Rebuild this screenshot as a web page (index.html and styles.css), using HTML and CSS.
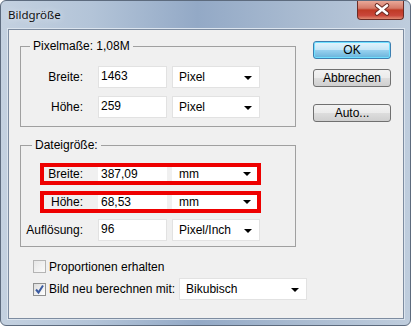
FILE: index.html
```html
<!DOCTYPE html>
<html lang="de">
<head>
    <meta charset="UTF-8">
    <title>Bildgröße</title>
    <link rel="stylesheet" href="styles.css">
</head>
<body>
<div class="window">
    <div class="titlebar">
        <span class="title">Bildgröße</span>
        <div class="close">
            <svg width="47" height="19" viewBox="0 0 47 19">
                <path d="M19 5.5 L29 13.5 M29 5.5 L19 13.5" stroke="#6a2b24" stroke-width="4.6" stroke-linecap="round"/>
                <path d="M19 5.5 L29 13.5 M29 5.5 L19 13.5" stroke="#ffffff" stroke-width="2.6" stroke-linecap="round"/>
            </svg>
        </div>
    </div>

    <div class="client">
        <div class="main">
            <fieldset class="group group-pixel">
                <legend>Pixelmaße: 1,08M</legend>
                <div class="row">
                    <span class="label">Breite:</span>
                    <div class="field">1463</div>
                    <div class="select">Pixel<span class="arrow"></span></div>
                </div>
                <div class="row">
                    <span class="label">Höhe:</span>
                    <div class="field">259</div>
                    <div class="select">Pixel<span class="arrow"></span></div>
                </div>
            </fieldset>

            <fieldset class="group group-file">
                <legend>Dateigröße:</legend>
                <div class="row marked">
                    <span class="label">Breite:</span>
                    <div class="field">387,09</div>
                    <div class="select">mm<span class="arrow"></span></div>
                </div>
                <div class="row marked">
                    <span class="label">Höhe:</span>
                    <div class="field">68,53</div>
                    <div class="select">mm<span class="arrow"></span></div>
                </div>
                <div class="row row-res">
                    <span class="label">Auflösung:</span>
                    <div class="field">96</div>
                    <div class="select">Pixel/Inch<span class="arrow"></span></div>
                </div>
            </fieldset>

            <div class="options">
                <div class="check-row">
                    <span class="checkbox disabled"></span>
                    <span class="check-text">Proportionen erhalten</span>
                </div>
                <div class="check-row">
                    <span class="checkbox">
                        <svg width="11" height="11" viewBox="0 0 11 11">
                            <path d="M2 5.5 L4.5 8.5 L9 1.5" fill="none" stroke="#3a5aa0" stroke-width="2"/>
                        </svg>
                    </span>
                    <span class="check-text">Bild neu berechnen mit:</span>
                    <div class="select select-wide">Bikubisch<span class="arrow"></span></div>
                </div>
            </div>
        </div>

        <div class="buttons">
            <div class="button default">OK</div>
            <div class="button">Abbrechen</div>
            <div class="button button-auto">Auto...</div>
        </div>
    </div>
</div>
</body>
</html>
```

FILE: styles.css
```css
body {
    margin: 0;
    font-family: "Liberation Sans", Arial, sans-serif;
    font-size: 12px;
    color: #000;
    background: #fff;
}

/* window frame */
.window {
    width: 411px;
    height: 326px;
    box-sizing: border-box;
    border: 1px solid #5d6b7e;
    border-radius: 6px;
    background: linear-gradient(to right, #c4d1e0 0%, #b3c4d8 22%, #93a9c6 48%, #a8bad0 72%, #bfcddd 100%);
    display: flex;
    flex-direction: column;
    overflow: hidden;
}
.titlebar {
    height: 28px;
    display: flex;
    justify-content: space-between;
    align-items: flex-start;
}
.title {
    font-family: "Noto Sans", "Liberation Sans", sans-serif;
    font-size: 11.5px;
    line-height: 28px;
    padding-left: 7px;
    color: #111;
    text-shadow: 0 0 6px #e8eef6;
}
.close {
    width: 47px;
    height: 19px;
    margin-right: 6px;
    box-sizing: border-box;
    border: 1px solid #6b2c25;
    border-top: none;
    border-radius: 0 0 4px 4px;
    background: linear-gradient(#e9a898 0%, #d47a68 40%, #bf3a25 50%, #c9463a 80%, #e08a72 100%);
    overflow: hidden;
}
.close svg {
    display: block;
    margin-top: -1px;
}

/* client area */
.client {
    flex: 1;
    margin: 0 6px 6px 7px;
    background: #f0f0f0;
    border: 1px solid #7d8ca0;
    box-shadow: 0 0 0 1px #dbe4ee;
    display: flex;
    padding: 9px 12px 0 11px;
}
.main {
    width: 276px;
    flex-shrink: 0;
    display: flex;
    flex-direction: column;
}

/* group boxes */
.group {
    margin: 0;
    padding: 13px 0 8px 0;
    border: 1px solid #a0a0a0;
    min-width: 0;
}
.group legend {
    margin-left: 9px;
    padding: 0 3px;
    line-height: 14px;
}
.group-file {
    margin-top: 11px;
    padding-top: 11px;
    padding-bottom: 5px;
}
.group-file legend {
    margin-left: 11px;
}

.row {
    display: flex;
    align-items: center;
    height: 22px;
    margin-bottom: 8px;
}
.row:last-child {
    margin-bottom: 0;
}
.label {
    width: 77px;
    box-sizing: border-box;
    padding-right: 15px;
    text-align: right;
    flex-shrink: 0;
}
.field {
    width: 69px;
    height: 22px;
    box-sizing: border-box;
    background: #fff;
    border: 1px solid #e2e2e2;
    padding-left: 2px;
    line-height: 18px;
    flex-shrink: 0;
}
.select {
    position: relative;
    width: 88px;
    height: 22px;
    box-sizing: border-box;
    margin-left: 5px;
    background: #fff;
    border: 1px solid #e2e2e2;
    padding-left: 6px;
    line-height: 20px;
    flex-shrink: 0;
}
.arrow {
    position: absolute;
    right: 7px;
    top: 9px;
    border-left: 4px solid transparent;
    border-right: 4px solid transparent;
    border-top: 4px solid #000;
}

/* rows marked with a red frame */
.row.marked {
    margin-left: 19px;
    width: 221px;
    box-sizing: border-box;
    border: 4px solid #ee0000;
    margin-bottom: 6px;
    overflow: hidden;
}
.row.marked .label {
    width: 54px;
}
.row.marked .field,
.row.marked .select {
    height: 14px;
    line-height: 14px;
    border: none;
}
.row.marked .field {
    padding-left: 3px;
}
.row.marked .select {
    padding-left: 7px;
}
.row.marked .arrow {
    top: 5px;
    right: 9px;
}
.row-res {
    margin-top: 4px;
}

/* checkboxes */
.options {
    padding-left: 13px;
    margin-top: 13px;
}
.check-row {
    display: flex;
    align-items: center;
    gap: 3px;
    white-space: nowrap;
}
.check-row + .check-row {
    margin-top: 5px;
}
.check-row:first-child {
    height: 13px;
}
.check-text {
    flex-shrink: 0;
}
.checkbox {
    width: 13px;
    height: 13px;
    flex-shrink: 0;
    box-sizing: border-box;
    border: 1px solid #8e8f8f;
    background: linear-gradient(135deg, #dcdcdc, #ffffff);
    display: flex;
    align-items: center;
    justify-content: center;
}
.checkbox.disabled {
    border-color: #b4b4b4;
    background: linear-gradient(135deg, #e6e6e6, #fafafa);
}
.select-wide {
    width: 128px;
    margin-left: 1px;
}

/* dialog buttons */
.buttons {
    margin-left: 17px;
    padding-top: 2px;
    display: flex;
    flex-direction: column;
}
.button {
    width: 78px;
    height: 18px;
    box-sizing: border-box;
    border: 1px solid #707070;
    border-radius: 3px;
    background: linear-gradient(#f2f2f2 0%, #ebebeb 50%, #dddddd 51%, #cfcfcf 100%);
    text-align: center;
    line-height: 16px;
    margin-bottom: 10px;
}
.button.default {
    border-color: #3c7fb1;
    background: linear-gradient(#e5f4fc 0%, #c4e5f6 50%, #98d1ef 51%, #68b3db 100%);
    box-shadow: inset 0 0 0 1px #6fe0ff;
}
.button-auto {
    margin-top: 7px;
}
```
